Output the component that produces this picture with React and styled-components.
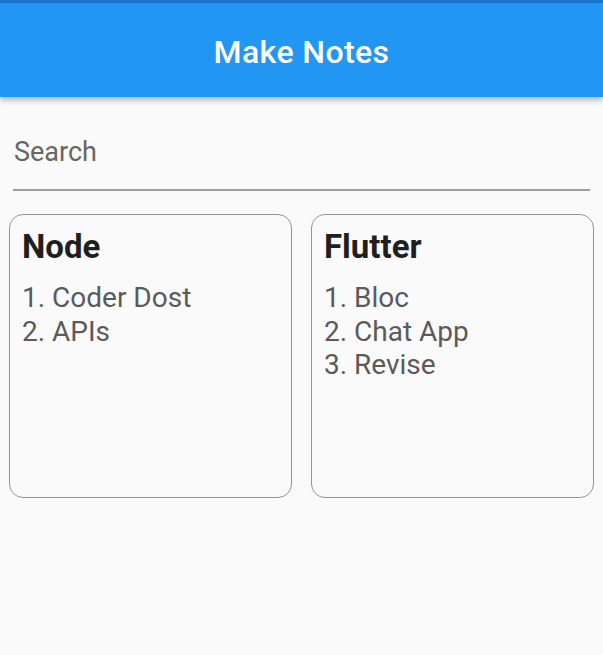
import React from 'react';
import styled, { createGlobalStyle } from 'styled-components';

const GlobalStyle = createGlobalStyle`
  html, body {
    margin: 0;
    padding: 0;
    background: #fafafa;
    font-family: Roboto, "Liberation Sans", sans-serif;
  }
`;

const Screen = styled.div`
  width: 603px;
  min-height: 655px;
  background: #fafafa;
  border-top: 3px solid #1976d2;
  box-sizing: border-box;
`;

const AppBar = styled.header`
  height: 94px;
  background: #2196f3;
  display: flex;
  align-items: center;
  justify-content: center;
  box-shadow: 0 3px 6px rgba(0, 0, 0, 0.3);
  position: relative;
`;

const Title = styled.h1`
  margin: 0;
  padding-top: 3px;
  color: #fff;
  font-size: 32px;
  font-weight: 500;
  letter-spacing: 0.4px;
  line-height: 40px;
`;

const SearchField = styled.div`
  margin: 38px 13px 0 13px;
  padding: 0 1px 20px 1px;
  border-bottom: 2px solid #9e9e9e;
  color: #666;
  font-size: 27px;
  line-height: 34px;
`;

const Grid = styled.div`
  display: grid;
  grid-template-columns: 1fr 1fr;
  gap: 19px;
  padding: 23px 9px 0 9px;
`;

const Card = styled.div`
  height: 284px;
  box-sizing: border-box;
  border: 1.5px solid #959595;
  border-radius: 14px;
  padding: 12px 12px;
`;

const CardTitle = styled.div`
  font-size: 33px;
  font-weight: 700;
  color: #1f1f1f;
  line-height: 40px;
  margin-bottom: 14px;
`;

const Item = styled.div`
  font-size: 28px;
  color: #5a5a5a;
  line-height: 33.5px;
`;

const notes = [
  { title: 'Node', items: ['Coder Dost', 'APIs'] },
  { title: 'Flutter', items: ['Bloc', 'Chat App', 'Revise'] },
];

export default function App() {
  return (
    <>
      <GlobalStyle />
      <Screen>
        <AppBar>
          <Title>Make Notes</Title>
        </AppBar>
        <SearchField>Search</SearchField>
        <Grid>
          {notes.map((note) => (
            <Card key={note.title}>
              <CardTitle>{note.title}</CardTitle>
              {note.items.map((item, i) => (
                <Item key={item}>{i + 1}. {item}</Item>
              ))}
            </Card>
          ))}
        </Grid>
      </Screen>
    </>
  );
}
